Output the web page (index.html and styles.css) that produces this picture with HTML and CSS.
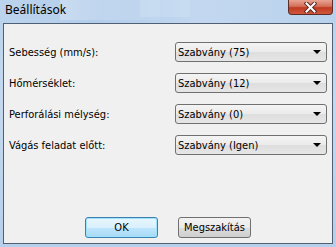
FILE: index.html
```html
<!DOCTYPE html>
<html>
<head>
  <title>Beállítások</title>
  <link rel="stylesheet" href="styles.css">
</head>
<body>
  <div class="window">
    <div class="titlebar">
      <span class="title">Beállítások</span>
      <div class="glass"></div>
      <div class="glass second"></div>
      <button class="close">
        <svg width="13" height="11" viewBox="0 0 13 11">
          <path d="M2.5 1.5 L10.5 9.5 M10.5 1.5 L2.5 9.5" stroke="#5a2a24" stroke-width="4" stroke-linecap="square"/>
          <path d="M2.5 1.5 L10.5 9.5 M10.5 1.5 L2.5 9.5" stroke="#fff" stroke-width="2" stroke-linecap="square"/>
        </svg>
      </button>
    </div>

    <div class="client">
      <div class="form">
        <label>Sebesség (mm/s):</label>
        <div class="combo"><span>Szabvány (75)</span><i class="arrow"></i></div>

        <label>Hőmérséklet:</label>
        <div class="combo"><span>Szabvány (12)</span><i class="arrow"></i></div>

        <label>Perforálási mélység:</label>
        <div class="combo"><span>Szabvány (0)</span><i class="arrow"></i></div>

        <label>Vágás feladat előtt:</label>
        <div class="combo"><span>Szabvány (Igen)</span><i class="arrow"></i></div>
      </div>

      <div class="buttons">
        <button class="btn default">OK</button>
        <button class="btn">Megszakítás</button>
      </div>
    </div>
  </div>
</body>
</html>
```

FILE: styles.css
```css
body {
  margin: 0;
  font-family: "DejaVu Sans Condensed", "DejaVu Sans", sans-serif;
}

.window {
  width: 336px;
  height: 247px;
  display: flex;
  flex-direction: column;
  background: linear-gradient(to bottom, #b9d1ec 0%, #c4d9f0 40%, #b6cfea 100%);
  box-sizing: border-box;
}

/* title bar */
.titlebar {
  height: 23px;
  position: relative;
  display: flex;
  align-items: flex-start;
  background: linear-gradient(to right, #bcd3ed 0%, #b3cdeb 30%, #c3d8f0 60%, #b9d1ec 100%);
}

.title {
  font-family: "Noto Sans", "Open Sans", sans-serif;
  font-size: 12px;
  color: #000;
  margin: 1px 0 0 5px;
  position: relative;
  z-index: 1;
}

.glass {
  position: absolute;
  left: 60px;
  top: 0;
  width: 100px;
  height: 20px;
  background: linear-gradient(to right, rgba(255,255,255,0.25), rgba(255,255,255,0.05));
}

.glass.second {
  left: 140px;
  width: 50px;
  height: 17px;
  background: rgba(255,255,255,0.12);
}

.close {
  margin-left: auto;
  margin-right: 3px;
  width: 45px;
  height: 15px;
  padding: 0;
  border: 1px solid #5c2c26;
  border-top: none;
  border-radius: 0 0 4px 4px;
  background: linear-gradient(to bottom, #e8a493 0%, #d4705a 45%, #c03a22 55%, #d0583c 100%);
  display: flex;
  align-items: center;
  justify-content: center;
}

/* client area */
.client {
  flex: 1;
  margin: 0 3px 3px 3px;
  border: 1px solid #4f6075;
  background: #f0f0f0;
  display: flex;
  flex-direction: column;
  font-size: 11px;
  color: #000;
}

.form {
  display: grid;
  grid-template-columns: 1fr 152px;
  grid-auto-rows: 20px;
  row-gap: 11px;
  align-items: center;
  padding: 18px 5px 0 5px;
}

.combo {
  height: 20px;
  box-sizing: border-box;
  border: 1px solid #707070;
  border-radius: 3px;
  background: linear-gradient(to bottom, #f4f4f4 0%, #ebebeb 50%, #dedede 51%, #e6e6e6 100%);
  display: flex;
  align-items: center;
  padding: 0 0 0 2px;
}

.combo span {
  flex: 1;
}

.arrow {
  width: 0;
  height: 0;
  border-left: 4px solid transparent;
  border-right: 4px solid transparent;
  border-top: 4px solid #000;
  margin-right: 5px;
}

.buttons {
  margin-top: auto;
  margin-bottom: 5px;
  display: flex;
  justify-content: center;
  gap: 20px;
}

.btn {
  height: 21px;
  min-width: 73px;
  font-family: "DejaVu Sans Condensed", "DejaVu Sans", sans-serif;
  font-size: 11px;
  color: #000;
  border: 1px solid #707070;
  border-radius: 3px;
  background: linear-gradient(to bottom, #f2f2f2 0%, #ebebeb 50%, #dddddd 51%, #cfcfcf 100%);
  padding: 0 4px;
}

.btn.default {
  width: 71px;
  border-color: #3c7fb1;
  background: linear-gradient(to bottom, #e9f6fd 0%, #d9f0fc 50%, #bee6fd 51%, #a7d9f5 100%);
  box-shadow: inset 0 0 0 1px #9ee3fc;
}
```
